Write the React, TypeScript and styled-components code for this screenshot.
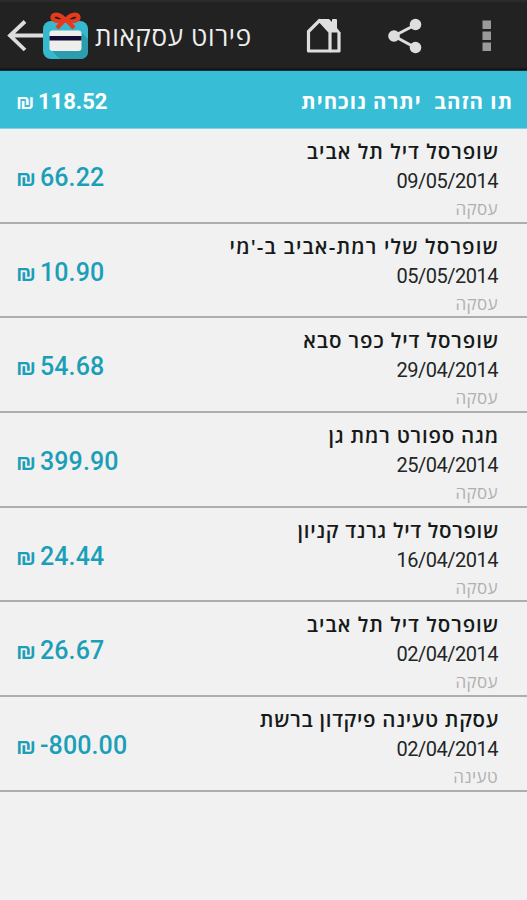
import React from 'react';
import styled, { createGlobalStyle } from 'styled-components';

const GlobalStyle = createGlobalStyle`
  * { box-sizing: border-box; }
  body { margin: 0; background: #f1f1f1; }
`;

const Screen = styled.div`
  width: 100%;
  max-width: 527px;
  height: 900px;
  overflow: hidden;
  display: flex;
  flex-direction: column;
  background: #f1f1f1;
  font-family: Roboto, 'Open Sans', 'Noto Sans', sans-serif;
`;

const ActionBar = styled.header`
  height: 71px;
  flex: none;
  display: flex;
  align-items: center;
  justify-content: space-between;
  padding: 0 35px 0 7px;
  background: linear-gradient(#2e2e2e 0, #222 3px, #222 67px, #101012 70px, #165862 71px);
`;

const TitleGroup = styled.div`
  display: flex;
  align-items: center;
`;

const Title = styled.h1`
  margin: 0 0 0 7px;
  font: 400 26px/36px 'Open Sans', sans-serif;
  letter-spacing: 0.65px;
  color: #eee;
  white-space: nowrap;
`;

const Actions = styled.div`
  display: flex;
  align-items: center;
`;

const IconButton = styled.button<{ $gap?: number }>`
  display: flex;
  padding: 0;
  border: 0;
  background: none;
  margin-left: ${(p) => p.$gap ?? 0}px;
`;

const BalanceBar = styled.section`
  height: 58px;
  flex: none;
  display: flex;
  align-items: center;
  justify-content: space-between;
  padding: 3px 14px 0 16px;
  background: #38bdd6;
  border-bottom: 1px solid #83d2e4;
  color: #fff;
`;

const BalanceLabel = styled.div`
  font: 700 20.5px/28px 'Open Sans', sans-serif;
  letter-spacing: 1px;
  white-space: pre;
`;

const List = styled.ul`
  list-style: none;
  margin: 0;
  padding: 0;
`;

const Row = styled.li`
  height: 94.67px;
  display: flex;
  justify-content: space-between;
  align-items: flex-start;
  padding: 8px 29px 0 16px;
  border-bottom: 2px solid #aeaeae;
`;

const Amount = styled.div<{ $size: number; $weight: number }>`
  display: flex;
  align-items: baseline;
  direction: ltr;
  font: ${(p) => p.$weight} ${(p) => p.$size}px/30px Roboto, sans-serif;
`;

const RowAmount = styled(Amount)`
  margin-top: 26px;
  color: #1b9fb8;
  letter-spacing: 0.1px;
`;

const Shekel = styled.span<{ $size: number; $width: number }>`
  width: ${(p) => p.$width}px;
  font: 500 ${(p) => p.$size}px/30px Inter, sans-serif;
`;

const Details = styled.div`
  display: flex;
  flex-direction: column;
  align-items: flex-start;
`;

const Merchant = styled.div<{ $tracking: number }>`
  margin-right: -1px;
  font: 600 20.5px/28px 'Open Sans', sans-serif;
  letter-spacing: ${(p) => p.$tracking}px;
  color: #161a1a;
  white-space: nowrap;
`;

const PostedOn = styled.div`
  margin-top: 1px;
  font: 400 20px/30px Roboto, sans-serif;
  letter-spacing: -0.5px;
  color: #222626;
`;

const Kind = styled.div`
  font: 400 17px/25px 'Open Sans', sans-serif;
  letter-spacing: 0.4px;
  color: #b0b0b0;
`;

const BackIcon = () => (
  <svg width="36" height="48" viewBox="0 0 36 48" fill="none" stroke="#ddd" strokeWidth="3.8">
    <path d="M18 9.500 3 23.500 18 38M3 23.500H36" />
  </svg>
);

const GiftIcon = () => (
  <svg width="45" height="48" viewBox="0 0 45 48">
    <rect x="0" y="9" width="45" height="38" rx="8" fill="#36b9cf" />
    <path d="M8 38 17 47H37Q45 47 45 39V27L38 20Z" fill="#2a9dae" />
    <rect x="6.500" y="18.500" width="32" height="20.500" rx="3" fill="#f0eeeb" />
    <rect x="6.500" y="24" width="32" height="4.500" fill="#120d36" />
    <g fill="none" stroke="#e63a1d" strokeWidth="4.200" strokeLinejoin="round">
      <path d="M22.500 8.500C18 2 10 1 9.500 5S17 10.500 22.500 8.500C27 2 35 1 35.500 5S28 10.500 22.500 8.500Z" />
      <path d="M21.500 8 14 16M23.500 8 31 16" />
    </g>
  </svg>
);

const HomeIcon = () => (
  <svg width="36" height="36" viewBox="0 0 36 36" fill="none" stroke="#dedede" strokeWidth="3.2" strokeLinejoin="round">
    <path d="M2.500 33V13.500L13.500 2.500 24 14V33Z" />
    <path d="M24 33H33V14" />
    <path d="M12.500 1H23L26 4V1.500Q26 1 27 1H30Q31 1 31 2V10L34.500 14.500H23.500Z" fill="#dedede" stroke="none" />
  </svg>
);

const ShareIcon = () => (
  <svg width="34" height="36" viewBox="0 0 34 36" fill="#dedede" stroke="#dedede" strokeWidth="3">
    <path d="M28 6.500 6 18 28 30" fill="none" />
    <g stroke="none">
      <circle cx="27.500" cy="6.500" r="5.800" />
      <circle cx="6" cy="18" r="5.800" />
      <circle cx="27.500" cy="29.500" r="5.800" />
    </g>
  </svg>
);

const MoreIcon = () => (
  <svg width="10" height="32" viewBox="0 0 10 32" fill="#9a9a9a">
    <path d="M0.500 0.500h8.500v8.500h-8.500zM0.500 11.500h8.500v8.500h-8.500zM0.500 22.500h8.500v8.500h-8.500z" />
  </svg>
);

const transactions = [
  { merchant: 'שופרסל דיל תל אביב', tracking: 0.97, date: '09/05/2014', kind: 'עסקה', amount: '66.22' },
  { merchant: "שופרסל שלי רמת-אביב ב-'מי", tracking: 1.14, date: '05/05/2014', kind: 'עסקה', amount: '10.90' },
  { merchant: 'שופרסל דיל כפר סבא', tracking: 0.91, date: '29/04/2014', kind: 'עסקה', amount: '54.68' },
  { merchant: 'מגה ספורט רמת גן', tracking: 0.79, date: '25/04/2014', kind: 'עסקה', amount: '399.90' },
  { merchant: 'שופרסל דיל גרנד קניון', tracking: 0.69, date: '16/04/2014', kind: 'עסקה', amount: '24.44' },
  { merchant: 'שופרסל דיל תל אביב', tracking: 0.97, date: '02/04/2014', kind: 'עסקה', amount: '26.67' },
  { merchant: 'עסקת טעינה פיקדון ברשת', tracking: 0.7, date: '02/04/2014', kind: 'טעינה', amount: '-800.00' },
];

export default function App() {
  return (
    <Screen>
      <GlobalStyle />
      <ActionBar>
        <TitleGroup>
          <IconButton aria-label="חזרה"><BackIcon /></IconButton>
          <GiftIcon />
          <Title dir="rtl">פירוט עסקאות</Title>
        </TitleGroup>
        <Actions>
          <IconButton aria-label="בית"><HomeIcon /></IconButton>
          <IconButton aria-label="שיתוף" $gap={46}><ShareIcon /></IconButton>
          <IconButton aria-label="עוד" $gap={60}><MoreIcon /></IconButton>
        </Actions>
      </ActionBar>
      <BalanceBar>
        <Amount $size={22} $weight={700}><Shekel $size={21.5} $width={22}>₪</Shekel>118.52</Amount>
        <BalanceLabel dir="rtl">{'תו הזהב  יתרה נוכחית'}</BalanceLabel>
      </BalanceBar>
      <List>
        {transactions.map((t, i) => (
          <Row key={i}>
            <RowAmount $size={25} $weight={500}><Shekel $size={23.5} $width={24}>₪</Shekel>{t.amount}</RowAmount>
            <Details dir="rtl">
              <Merchant $tracking={t.tracking}>{t.merchant}</Merchant>
              <PostedOn>{t.date}</PostedOn>
              <Kind>{t.kind}</Kind>
            </Details>
          </Row>
        ))}
      </List>
    </Screen>
  );
}
